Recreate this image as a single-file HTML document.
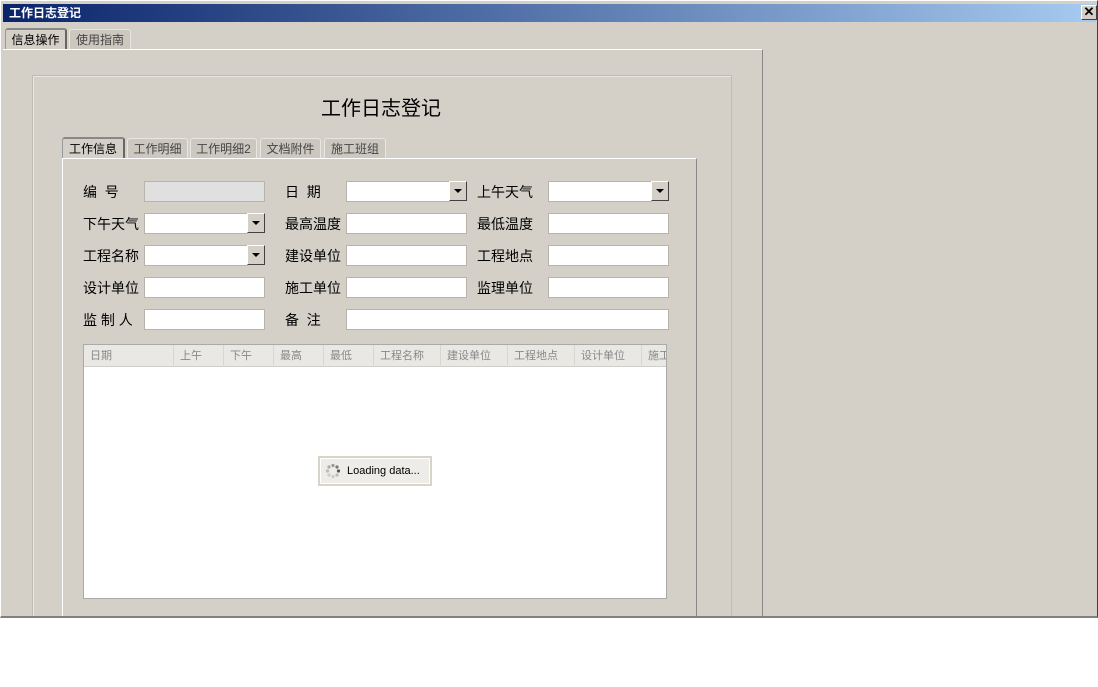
<!DOCTYPE html>
<html><head><meta charset="utf-8"><style>
*{margin:0;padding:0;box-sizing:border-box}
body{width:1098px;height:687px;background:#fff;position:relative;overflow:hidden;font-family:"Liberation Sans","Noto Sans CJK SC","WenQuanYi Zen Hei",sans-serif}
.a{position:absolute}
.win{left:0;top:0;width:1098px;height:618px;background:#d4d0c8;border-left:1px solid #fff;border-top:1px solid #fff;border-right:1px solid #404040;border-bottom:2px solid #808080}
.title{left:3px;top:4px;width:1093px;height:18px;background:linear-gradient(to right,#0a246a,#a6caf0);color:#fff;font-size:12px;font-weight:bold;line-height:18px;padding-left:6px}
.close{left:1081px;top:5px;width:16px;height:15px;background:#d4d0c8;border:1px solid;border-color:#fff #404040 #404040 #fff;font-size:13px;line-height:12px;text-align:center;color:#000;font-weight:bold}
.tab{height:21px;font-size:12px;line-height:20px;text-align:center;color:#444;background:#ccc8c0;border:1px solid #e8e6e0;border-bottom:none;border-radius:3px 3px 0 0}
.tab.on{background:#d4d0c8;color:#000;border-color:#888 #666 transparent #999;border-width:2px 2px 0 1px;height:22px}
.lbl{font-size:14px;color:#000;line-height:22px}
.in{height:21px;background:#fff;border:1px solid #b8b4ac}
.dd{width:18px;height:20px;background:#d4d0c8;border:1px solid;border-color:#fff #404040 #404040 #fff}
.dd:after{content:"";position:absolute;left:4px;top:7px;border:4px solid transparent;border-top:4px solid #000;border-bottom:none}
.hd{top:345px;height:22px;font-size:11px;color:#888;line-height:22px;padding-left:6px;border-right:1px solid #d8d6d0}
</style></head><body>
<div class="a win"></div>
<div class="a title">工作日志登记</div>
<div class="a close">✕</div>
<div class="a tab on" style="left:5px;top:28px;width:62px">信息操作</div>
<div class="a tab" style="left:69px;top:29px;width:62px;height:20px">使用指南</div>
<div class="a" style="left:3px;top:49px;width:760px;height:567px;border-top:1px solid #fff;border-right:1px solid #888"></div>
<div class="a" style="left:32px;top:75px;width:700px;height:541px;border:1px solid #c0bcb4;border-bottom:none;box-shadow:inset 1px 1px 0 #e8e6e2"></div>
<div class="a" style="left:0;top:92px;width:762px;text-align:center;font-size:20px;color:#000">工作日志登记</div>
<div class="a tab on" style="left:62px;top:137px;width:63px">工作信息</div>
<div class="a tab" style="left:127px;top:138px;width:61px;height:20px">工作明细</div>
<div class="a tab" style="left:190px;top:138px;width:67px;height:20px">工作明细2</div>
<div class="a tab" style="left:260px;top:138px;width:61px;height:20px">文档附件</div>
<div class="a tab" style="left:324px;top:138px;width:62px;height:20px">施工班组</div>
<div class="a" style="left:62px;top:158px;width:635px;height:458px;border-top:1px solid #fff;border-left:1px solid #fff;border-right:1px solid #888"></div>

<div class="a lbl" style="left:83px;top:181px">编&nbsp;&nbsp;号</div>
<div class="a in" style="left:144px;top:181px;width:121px;background:#e0e0e0"></div>
<div class="a lbl" style="left:285px;top:181px">日&nbsp;&nbsp;期</div>
<div class="a in" style="left:346px;top:181px;width:104px"></div><div class="a dd" style="left:449px;top:181px"></div>
<div class="a lbl" style="left:477px;top:181px">上午天气</div>
<div class="a in" style="left:548px;top:181px;width:104px"></div><div class="a dd" style="left:651px;top:181px"></div>

<div class="a lbl" style="left:83px;top:213px">下午天气</div>
<div class="a in" style="left:144px;top:213px;width:104px"></div><div class="a dd" style="left:247px;top:213px"></div>
<div class="a lbl" style="left:285px;top:213px">最高温度</div>
<div class="a in" style="left:346px;top:213px;width:121px"></div>
<div class="a lbl" style="left:477px;top:213px">最低温度</div>
<div class="a in" style="left:548px;top:213px;width:121px"></div>

<div class="a lbl" style="left:83px;top:245px">工程名称</div>
<div class="a in" style="left:144px;top:245px;width:104px"></div><div class="a dd" style="left:247px;top:245px"></div>
<div class="a lbl" style="left:285px;top:245px">建设单位</div>
<div class="a in" style="left:346px;top:245px;width:121px"></div>
<div class="a lbl" style="left:477px;top:245px">工程地点</div>
<div class="a in" style="left:548px;top:245px;width:121px"></div>

<div class="a lbl" style="left:83px;top:277px">设计单位</div>
<div class="a in" style="left:144px;top:277px;width:121px"></div>
<div class="a lbl" style="left:285px;top:277px">施工单位</div>
<div class="a in" style="left:346px;top:277px;width:121px"></div>
<div class="a lbl" style="left:477px;top:277px">监理单位</div>
<div class="a in" style="left:548px;top:277px;width:121px"></div>

<div class="a lbl" style="left:83px;top:309px">监&nbsp;制&nbsp;人</div>
<div class="a in" style="left:144px;top:309px;width:121px"></div>
<div class="a lbl" style="left:285px;top:309px">备&nbsp;&nbsp;注</div>
<div class="a in" style="left:346px;top:309px;width:323px"></div>

<div class="a" style="left:83px;top:344px;width:584px;height:255px;background:#fff;border:1px solid #aaa"></div>
<div class="a" style="left:84px;top:345px;width:582px;height:22px;background:#eae8e4;border-bottom:1px solid #d0cec8"></div>
<div class="a hd" style="left:84px;width:90px">日期</div>
<div class="a hd" style="left:174px;width:50px">上午</div>
<div class="a hd" style="left:224px;width:50px">下午</div>
<div class="a hd" style="left:274px;width:50px">最高</div>
<div class="a hd" style="left:324px;width:50px">最低</div>
<div class="a hd" style="left:374px;width:67px">工程名称</div>
<div class="a hd" style="left:441px;width:67px">建设单位</div>
<div class="a hd" style="left:508px;width:67px">工程地点</div>
<div class="a hd" style="left:575px;width:67px">设计单位</div>
<div class="a hd" style="left:642px;width:24px;overflow:hidden;white-space:nowrap;border:none">施工</div>

<div class="a" style="left:318px;top:456px;width:114px;height:30px;background:#eeece8;border:2px solid #d8d4c8;box-shadow:inset 0 0 0 1px #fff;font-size:11px;line-height:26px;padding-left:27px;color:#000">Loading data...</div>
<svg class="a" style="left:325px;top:463px" width="16" height="16" viewBox="0 0 16 16">
<circle cx="8" cy="2.5" r="1.6" fill="#999"/><circle cx="12" cy="4" r="1.6" fill="#777"/><circle cx="13.5" cy="8" r="1.6" fill="#555"/><circle cx="12" cy="12" r="1.6" fill="#bbb"/><circle cx="8" cy="13.5" r="1.6" fill="#ccc"/><circle cx="4" cy="12" r="1.6" fill="#ccc"/><circle cx="2.5" cy="8" r="1.6" fill="#bbb"/><circle cx="4" cy="4" r="1.6" fill="#aaa"/></svg>
</body></html>
